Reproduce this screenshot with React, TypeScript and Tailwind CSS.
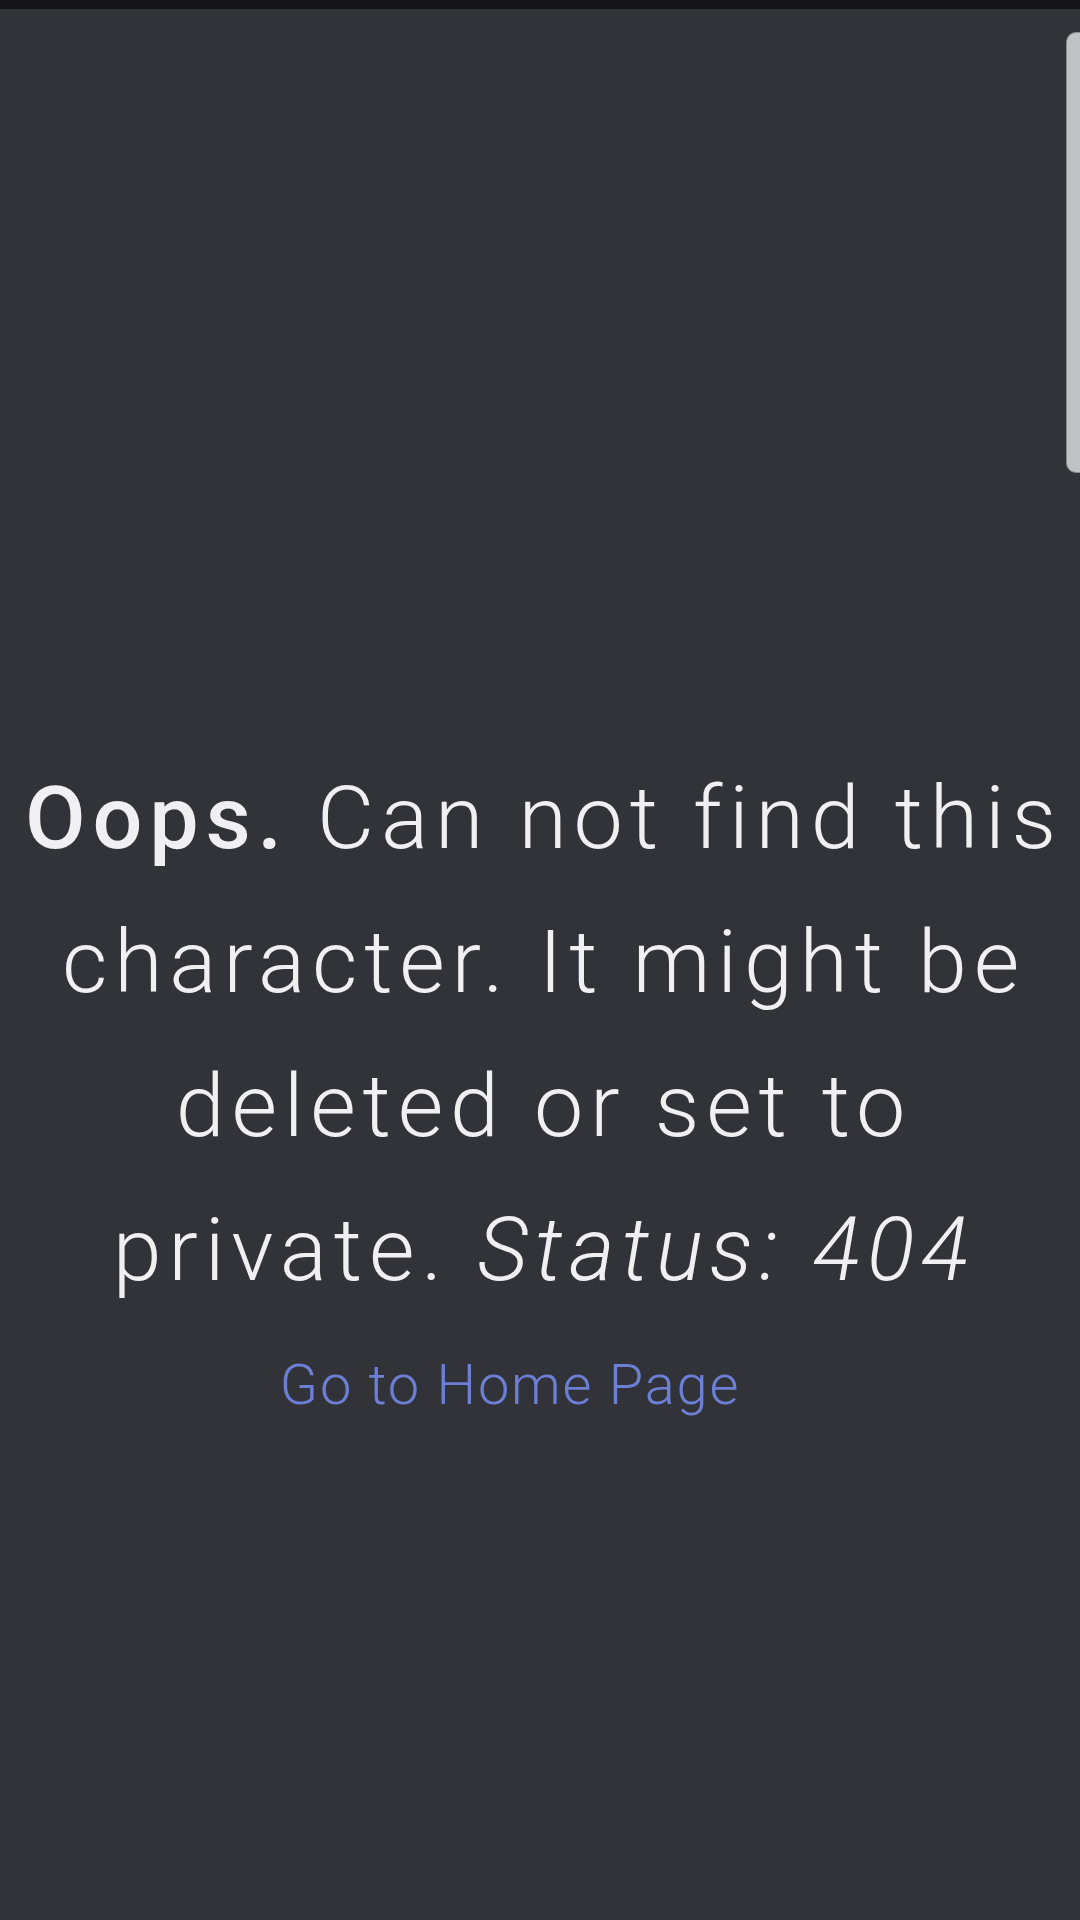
export default function App() {
    return (
        <div className="relative w-[1080px] h-[1920px] bg-[#323338] overflow-hidden" style={{ fontFamily: "Roboto, 'Noto Sans', sans-serif" }}>
            <div className="h-[9px] bg-[#151517]" />
            <div className="absolute right-0 top-[32px] w-[14px] h-[441px] rounded-l-[10px] bg-[#c1c2c4] border border-r-0 border-[#8a8b8e]" />

            <div className="pt-[737px] flex flex-col items-center text-[#f0f0f2]">
                <div className="pl-[8px] text-center text-[88px] leading-[144px] font-light tracking-[6.8px]">
                    <div className="whitespace-nowrap"><span className="font-medium">Oops.</span> Can not find this</div>
                    <div className="whitespace-nowrap">character. It might be</div>
                    <div className="whitespace-nowrap">deleted or set to</div>
                    <div className="whitespace-nowrap">private. <em className="italic">Status: 404</em></div>
                </div>
                <a href="#" className="mt-[33px] mr-[60px] text-[56px] leading-[60px] font-light tracking-[1.8px] text-[#6b7fd7]">
                    Go to Home Page
                </a>
            </div>
        </div>
    );
}
